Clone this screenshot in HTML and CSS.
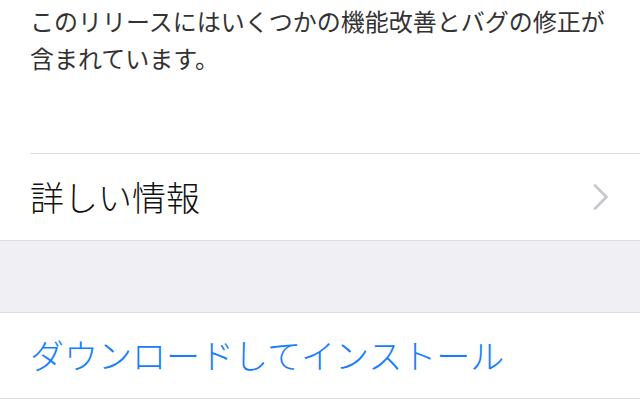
FILE: index.html
```html
<!DOCTYPE html>
<html lang="ja">
<head>
<meta charset="utf-8">
<link rel="stylesheet" href="styles.css">
</head>
<body>
<div class="page">
  <section class="notes">
    <p class="notes-text">このリリースにはいくつかの機能改善とバグの修正が含まれています。</p>
  </section>
  <div class="group">
    <div class="row row-more">
      <span class="row-label">詳しい情報</span>
      <svg class="chevron" width="16" height="26" viewBox="0 0 16 26">
        <path d="M2 1.5 L13.5 13 L2 24.5" fill="none" stroke="#c7c7cc" stroke-width="2.6" stroke-linecap="round" stroke-linejoin="round"/>
      </svg>
    </div>
  </div>
  <div class="spacer"></div>
  <div class="group group-install">
    <div class="row row-install">
      <span class="row-label link">ダウンロードしてインストール</span>
    </div>
  </div>
</div>
</body>
</html>
```
FILE: styles.css
```css
html, body {
  margin: 0;
  padding: 0;
  background: #ffffff;
}
body {
  font-family: "Noto Sans CJK JP", "Noto Sans", sans-serif;
  width: 640px;
  height: 400px;
  overflow: hidden;
}
.page {
  display: flex;
  flex-direction: column;
}
.notes {
  background: #fff;
  padding: 2px 30px 0 30px;
  height: 153px;
  box-sizing: border-box;
}
.notes-text {
  margin: 0;
  font-size: 24px;
  line-height: 37px;
  font-weight: 400;
  color: #333333;
}
.group {
  background: #fff;
  padding-left: 30px;
  border-bottom: 1px solid #dcdce0;
}
.row {
  display: flex;
  align-items: center;
  justify-content: space-between;
  box-sizing: border-box;
  padding-right: 30px;
}
.row-more {
  height: 87px;
  border-top: 1px solid #dcdce0;
}
.row-label {
  font-size: 34px;
  font-weight: 300;
  color: #111111;
  line-height: 1;
}
.row-label.link {
  color: #147efb;
  position: relative;
  top: -1px;
}
.chevron {
  display: block;
  margin-right: 1px;
}
.spacer {
  height: 71px;
  background: #efeff4;
  border-bottom: 1px solid #dcdce0;
}
.row-install {
  height: 85px;
}
```
